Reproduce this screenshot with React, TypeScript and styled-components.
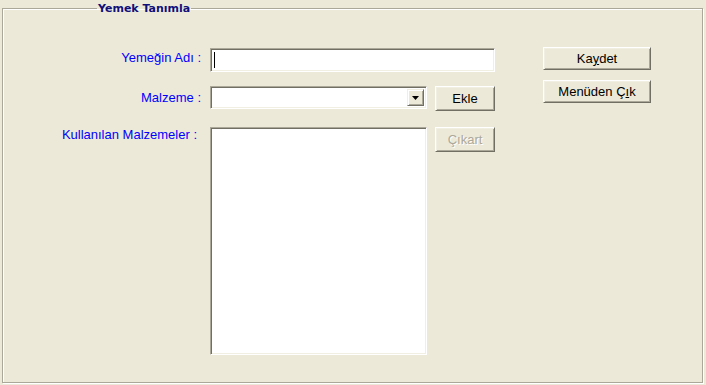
import React from "react";
import styled, { createGlobalStyle } from "styled-components";

// --- 전역 스타일 ---
const GlobalStyle = createGlobalStyle`
  html, body {
    margin: 0;
    padding: 0;
    background-color: #ece9d8;
  }
  body {
    width: 706px;
    height: 385px;
    overflow: hidden;
    font-family: "Liberation Sans", Arial, sans-serif;
    font-size: 13px;
  }
`;

// --- Styled Components ---

const Page = styled.div`
  width: 706px;
  height: 385px;
  background-color: #ece9d8;
`;

// 그룹박스 (etched border)
const GroupBox = styled.fieldset`
  box-sizing: border-box;
  width: 701px;
  height: 383px;
  margin: 0 0 0 2px;
  padding: 0;
  min-width: 0;
  border: 1px solid #aca899;
  box-shadow: inset 1px 1px 0 #ffffff, 1px 1px 0 #ffffff;
`;

const GroupTitle = styled.legend`
  margin-left: 94px;
  padding: 0 1px;
  font-family: "DejaVu Sans", Verdana, sans-serif;
  font-size: 11px;
  font-weight: bold;
  line-height: 17px;
  color: #10107a;
`;

const Body = styled.div`
  display: flex;
  align-items: flex-start;
  gap: 48px;
  padding-top: 30px;
`;

const FormColumn = styled.div`
  display: flex;
  flex-direction: column;
`;

const FieldRow = styled.div<{ $top: number }>`
  display: grid;
  grid-template-columns: 199px 217px 60px;
  column-gap: 8px;
  align-items: start;
  margin-top: ${(p) => p.$top}px;
`;

const Label = styled.label<{ $offset: number; $pad?: number }>`
  justify-self: end;
  padding-top: ${(p) => p.$offset}px;
  padding-right: ${(p) => p.$pad ?? 1}px;
  color: #0000ff;
  font-size: 13px;
  line-height: 15px;
  white-space: nowrap;
`;

// 움푹 들어간(sunken) 입력 테두리
const Sunken = styled.div`
  box-sizing: border-box;
  background-color: #ffffff;
  border-style: solid;
  border-width: 1px;
  border-color: #aca899 #ffffff #ffffff #aca899;
  box-shadow: inset 1px 1px 0 #716f64, inset -1px -1px 0 #f1efe2;
`;

const TextBox = styled(Sunken)`
  width: 285px;
  height: 24px;
  grid-column: 2 / 4;
  padding: 3px 0 0 3px;
`;

const Caret = styled.span`
  display: block;
  width: 1px;
  height: 16px;
  background-color: #000000;
`;

const ComboBox = styled(Sunken)`
  width: 217px;
  height: 23px;
  display: flex;
  justify-content: flex-end;
  padding: 2px;
`;

const DropButton = styled.div`
  box-sizing: border-box;
  width: 17px;
  height: 100%;
  display: flex;
  align-items: center;
  justify-content: center;
  background-color: #ece9d8;
  border-style: solid;
  border-width: 1px;
  border-color: #f1efe2 #716f64 #716f64 #f1efe2;
  box-shadow: inset 1px 1px 0 #ffffff, inset -1px -1px 0 #aca899;
`;

const ListBox = styled(Sunken)`
  width: 217px;
  height: 228px;
`;

// 돌출된(raised) 버튼
const Button = styled.button<{ $w: number; $h: number }>`
  box-sizing: border-box;
  width: ${(p) => p.$w}px;
  height: ${(p) => p.$h}px;
  padding: 0;
  margin: 0;
  font-family: "Liberation Sans", Arial, sans-serif;
  font-size: 13px;
  line-height: 15px;
  color: #000000;
  background-color: #ece9d8;
  border-style: solid;
  border-width: 1px;
  border-color: #ffffff #716f64 #716f64 #ffffff;
  box-shadow: inset 1px 1px 0 #f1efe2, inset -1px -1px 0 #aca899;
  cursor: default;

  &:disabled {
    color: #aca899;
    text-shadow: 1px 1px 0 #ffffff;
  }
`;

const ButtonColumn = styled.div`
  display: flex;
  flex-direction: column;
  gap: 10px;
`;

// --- Component ---
const App = () => {
  return (
    <Page>
      <GlobalStyle />
      <GroupBox>
        <GroupTitle>Yemek Tanımla</GroupTitle>
        <Body>
          <FormColumn>
            <FieldRow $top={1}>
              <Label $offset={2}>Yemeğin Adı :</Label>
              <TextBox>
                <Caret />
              </TextBox>
            </FieldRow>

            <FieldRow $top={14}>
              <Label $offset={4}>Malzeme :</Label>
              <ComboBox>
                <DropButton>
                  <svg width="7" height="4" viewBox="0 0 7 4">
                    <path d="M0 0H7L3.5 4Z" fill="#000" />
                  </svg>
                </DropButton>
              </ComboBox>
              <Button $w={60} $h={25}>Ekle</Button>
            </FieldRow>

            <FieldRow $top={16}>
              <Label $offset={0} $pad={5}>
                Kullanılan Malzemeler :
              </Label>
              <ListBox />
              <Button $w={60} $h={25} disabled>
                Çıkart
              </Button>
            </FieldRow>
          </FormColumn>

          <ButtonColumn>
            <Button $w={108} $h={23}>
              Ka<u>y</u>det
            </Button>
            <Button $w={108} $h={23}>
              Menüden Ç<u>ı</u>k
            </Button>
          </ButtonColumn>
        </Body>
      </GroupBox>
    </Page>
  );
};

export default App;
